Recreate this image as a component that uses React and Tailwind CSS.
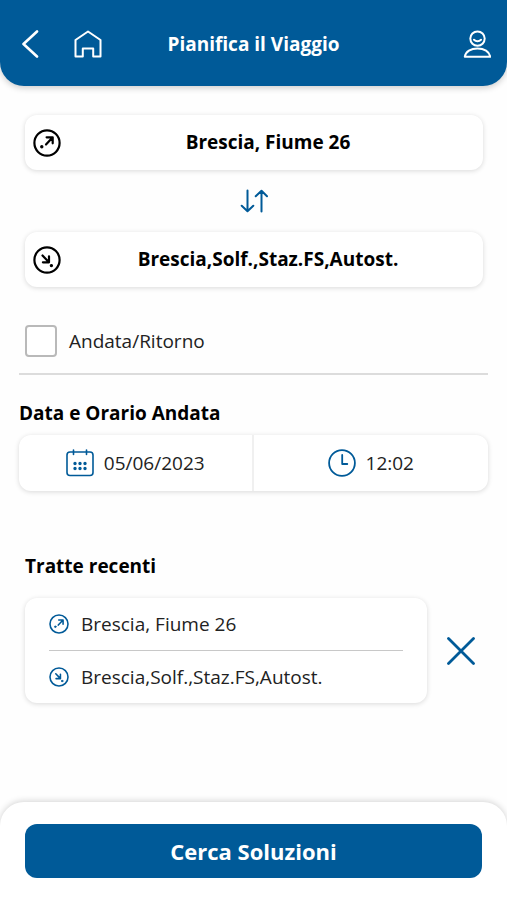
// Pianifica il Viaggio: scelta fermate, data/ora e tratte recenti

import { useState } from 'react';

const CARD = 'bg-white shadow-[0_1px_5px_rgba(0,0,0,0.15)]';

const Icon = ({ className = 'size-7', strokeWidth = 2, children }) => (
  <svg
    viewBox="0 0 28 28"
    className={className}
    fill="none"
    stroke="currentColor"
    strokeWidth={strokeWidth}
    strokeLinecap="round"
    strokeLinejoin="round"
    aria-hidden="true"
  >
    {children}
  </svg>
);

const BackIcon = () => (
  <Icon strokeWidth={2.6}>
    <path d="M21 1.5 7.5 14 21 26.5" />
  </Icon>
);

const HomeIcon = () => (
  <Icon strokeWidth={2}>
    <path d="M14 1.5 1.5 10V26.5H8.8V18.5H19.2V26.5H26.5V10Z" />
  </Icon>
);

const UserIcon = () => (
  <Icon strokeWidth={2}>
    <circle cx="14.5" cy="8.6" r="7.2" />
    <path d="M11 9.8c2 2 5 2 7 0M1.8 26.7c.8-5 6-8.3 12.7-8.3s11.9 3.3 12.7 8.3Z" />
  </Icon>
);

const DepartureIcon = ({ className }) => (
  <Icon className={className} strokeWidth={2.2}>
    <circle cx="14" cy="14" r="12.6" />
    <path d="M13 15.5 19.3 8.7M13.6 8.3H19.7V14.3" />
    <circle cx="8.8" cy="17.8" r="1.1" fill="currentColor" strokeWidth="1.2" />
  </Icon>
);

const ArrivalIcon = ({ className }) => (
  <Icon className={className} strokeWidth={2.2}>
    <circle cx="14" cy="14" r="12.6" />
    <path d="M9.5 9.5 15.7 15.9M16 10.3V16.3H9.9" />
    <circle cx="18.4" cy="19.6" r="1.1" fill="currentColor" strokeWidth="1.2" />
  </Icon>
);

const SwapIcon = () => (
  <Icon>
    <path d="M7.5 3.5V24M1.7 18.7 7.5 24.3 13.3 18.7M21.5 24.5V4M15.7 9.3 21.5 3.7 27 9.3" />
  </Icon>
);

const CalendarIcon = () => (
  <Icon strokeWidth={1.6}>
    <rect x="1" y="3" width="26" height="23.5" rx="3" />
    <path d="M7.5 1V5.5M20.5 1V5.5" />
    <path d="M9 14.5h.01M14 14.5h.01M19 14.5h.01M9 19.5h.01M14 19.5h.01M19 19.5h.01" strokeWidth="3.4" />
  </Icon>
);

const ClockIcon = () => (
  <Icon strokeWidth={1.8}>
    <circle cx="14" cy="14" r="12.9" />
    <path d="M14.2 6V15H19.3" />
  </Icon>
);

const CloseIcon = () => (
  <Icon strokeWidth={2.8}>
    <path d="M1.5 1.5 26.5 26.5M26.5 1.5 1.5 26.5" />
  </Icon>
);

const StopButton = ({ icon: StopIcon, name }) => (
  <button type="button" className={`flex w-full items-center rounded-xl px-2 py-3 text-black ${CARD}`}>
    <StopIcon className="size-7 shrink-0" />
    <span className="flex-1 leading-[31px] font-bold">{name}</span>
  </button>
);

const RecentStop = ({ icon: StopIcon, name }) => (
  <span className="flex items-center gap-3">
    <StopIcon className="size-5 shrink-0 text-[#005a98]" />
    <span>{name}</span>
  </span>
);

export default function App() {
  const [from, setFrom] = useState('Brescia, Fiume 26');
  const [to, setTo] = useState('Brescia,Solf.,Staz.FS,Autost.');
  const [showRecent, setShowRecent] = useState(true);

  const swap = () => {
    setFrom(to);
    setTo(from);
  };

  return (
    <div className="flex min-h-screen flex-col bg-[#fefefe] font-['Open_Sans','Noto_Sans',sans-serif] text-[19px] leading-7 text-[#222]">
      <header className="grid grid-cols-[1fr_auto_1fr] items-center rounded-b-3xl bg-[#005a98] px-4 pt-7 pb-[26px] text-white shadow-[0_2px_6px_rgba(0,0,0,0.2)]">
        <div className="flex gap-[30px]">
          <button type="button" aria-label="Indietro"><BackIcon /></button>
          <a href="#home" aria-label="Home"><HomeIcon /></a>
        </div>
        <h1 className="leading-8 font-bold">Pianifica il Viaggio</h1>
        <button type="button" aria-label="Profilo" className="justify-self-end"><UserIcon /></button>
      </header>

      <main className="flex-1 pt-[29px]">
        <section className="flex flex-col items-center pr-6 pl-[25px]">
          <StopButton icon={DepartureIcon} name={from} />
          <button type="button" aria-label="Inverti fermate" onClick={swap} className="my-[17px] text-[#005a98]">
            <SwapIcon />
          </button>
          <StopButton icon={ArrivalIcon} name={to} />
        </section>

        <section className="px-[19px]">
          <label className="mt-[38px] flex items-center gap-3 border-b-2 border-[#dcdcdc] px-[6px] pb-4">
            <input
              type="checkbox"
              className="size-8 appearance-none rounded-sm border-2 border-[#b9b9b9] bg-white checked:bg-[#005a98]"
            />
            Andata/Ritorno
          </label>

          <h2 className="mt-6 font-bold text-black">Data e Orario Andata</h2>
          <div className={`mt-2 grid grid-cols-2 divide-x-2 divide-[#f0f0f0] rounded-xl ${CARD}`}>
            <button type="button" className="flex items-center justify-center gap-[10px] py-[14px]">
              <span className="text-[#005a98]"><CalendarIcon /></span>
              05/06/2023
            </button>
            <button type="button" className="flex items-center justify-center gap-[10px] py-[14px]">
              <span className="text-[#005a98]"><ClockIcon /></span>
              12:02
            </button>
          </div>
        </section>

        {showRecent && (
          <section className="mt-[61px] mb-8 px-[25px]">
            <h2 className="font-bold text-black">Tratte recenti</h2>
            <div className="mt-[18px] flex items-center gap-5 pr-[7px]">
              <button type="button" className={`flex-1 rounded-xl px-6 py-3 text-left ${CARD}`}>
                <span className="block border-b border-[#c8c8c8] pb-3">
                  <RecentStop icon={DepartureIcon} name="Brescia, Fiume 26" />
                </span>
                <span className="block pt-3">
                  <RecentStop icon={ArrivalIcon} name="Brescia,Solf.,Staz.FS,Autost." />
                </span>
              </button>
              <button
                type="button"
                aria-label="Elimina tratta"
                onClick={() => setShowRecent(false)}
                className="text-[#005a98]"
              >
                <CloseIcon />
              </button>
            </div>
          </section>
        )}
      </main>

      <footer className="rounded-t-3xl bg-white px-[25px] py-[22px] shadow-[0_-1px_6px_rgba(0,0,0,0.17)]">
        <button
          type="button"
          className="w-full rounded-xl bg-[#005a98] py-3 text-[22px] leading-[30px] font-bold text-white"
        >
          Cerca Soluzioni
        </button>
      </footer>
    </div>
  );
}
